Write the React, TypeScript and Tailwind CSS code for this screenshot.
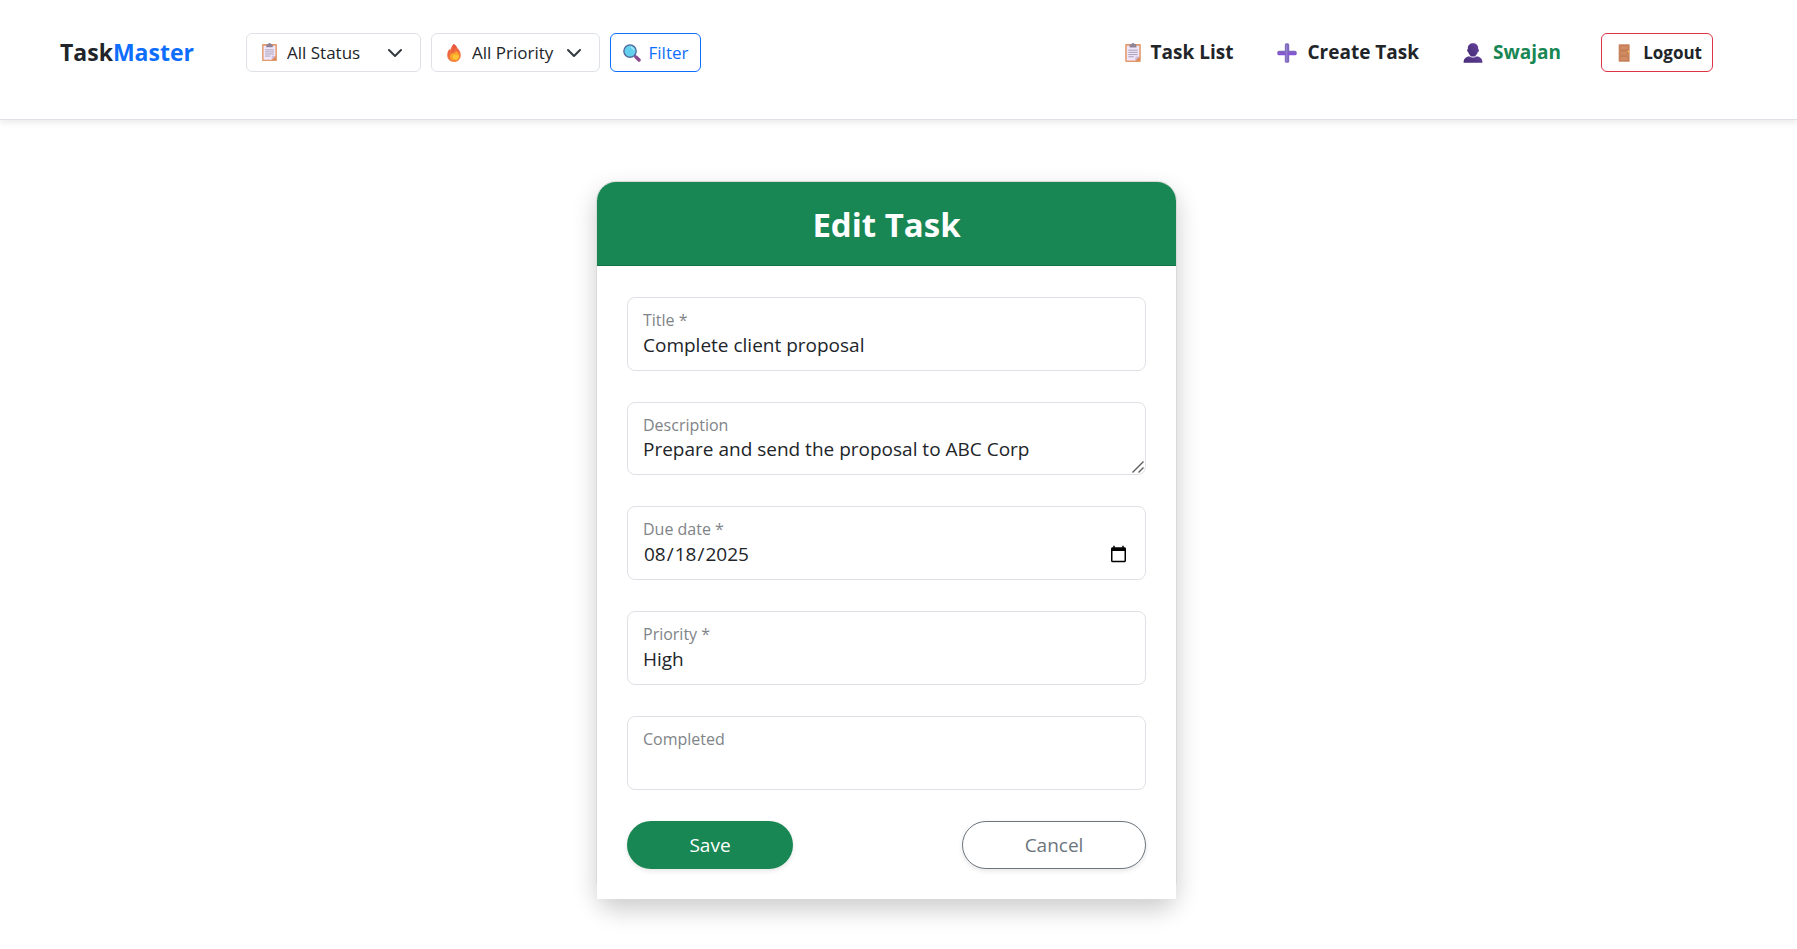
import React from 'react';

type IconProps = { className?: string };

function ClipboardIcon({ className = '' }: IconProps) {
  return (
    <svg viewBox="0 0 32 32" className={className} aria-hidden="true">
      <rect x="3.5" y="1.5" width="25" height="29" rx="1.6" fill="#e39b6c" />
      <path d="M6 4.5h20V22l-6 6H6z" fill="#efe6fa" />
      <path d="M26 21.5h-4.5a1.8 1.8 0 0 0-1.8 1.8V28z" fill="#cdb8e0" />
      <path d="M20 28.5l6.5-6.5v6.5z" fill="#dc8a5c" />
      <path d="M10.5 3.8c0-1 .8-1.8 1.8-1.8h1.2a2.6 2.6 0 0 1 5 0h1.2c1 0 1.8.8 1.8 1.8V7h-11z" fill="#8f8396" />
      <path d="M8.5 11.5h15M8.5 15h15M8.5 18.5h15M8.5 22h9" stroke="#a79bb4" strokeWidth="1.5" />
    </svg>
  );
}

function FireIcon({ className = '' }: IconProps) {
  return (
    <svg viewBox="0 0 32 32" className={className} aria-hidden="true">
      <defs>
        <linearGradient id="flame" x1="0.3" y1="0" x2="0.6" y2="1">
          <stop offset="0" stopColor="#e84a3f" />
          <stop offset="1" stopColor="#f58a3c" />
        </linearGradient>
      </defs>
      <path
        d="M15.8 0c3 1.600 5.300 4.400 6.200 7.600 2.600 1.800 6 6 6 11.900C28 27 23 32 16.200 32 9 32 4 27 4 20.100c0-5.300 1.800-8.700 4.200-10.800.4-.3.8 0 .8.500v2.600c1.200-4.200 2.800-8.400 6.100-12.200.2-.2.500-.3.700-.2z"
        fill="url(#flame)"
      />
      <path d="M13.500 5c-1.800 4-4.300 6.500-5 11M19.500 7.500c0 3.500-1 5-2.500 7" stroke="#f7794a" strokeWidth="1.600" fill="none" />
      <path
        d="M20.500 12.500c3 2.600 4.700 5.700 4.500 9.200-.3 4.200-3.600 7.300-8.300 7.300-4.900 0-8-2.900-8-6.800 0-3.300 2.300-5 4.700-5.700 3.300-1 5.800-1 7.100-4z"
        fill="#fba42c"
      />
      <path d="M22.300 18c1 5-2 9.500-6.300 10 4.700.8 8.300-2 8.300-6.200 0-1.500-.8-2.800-2-3.800z" fill="#ffd23d" />
      <ellipse cx="18" cy="23" rx="4.500" ry="4" fill="#ffc534" />
    </svg>
  );
}

function SearchIcon({ className = '' }: IconProps) {
  return (
    <svg viewBox="0 0 32 32" className={className} aria-hidden="true">
      <path d="M19.500 19.500l4 4" stroke="#5b6f9e" strokeWidth="3" />
      <path d="M23 23l5.500 5.500" stroke="#8a4a8c" strokeWidth="6" strokeLinecap="round" />
      <circle cx="12.500" cy="12.500" r="11" fill="#63d0ee" stroke="#52689b" strokeWidth="2.400" />
      <path d="M14.500 5.500a8 8 0 0 1 5 5" stroke="#b5ecf8" strokeWidth="2" strokeLinecap="round" fill="none" />
    </svg>
  );
}

function PlusIcon({ className = '' }: IconProps) {
  return (
    <svg viewBox="0 0 32 32" className={className} aria-hidden="true">
      <defs>
        <linearGradient id="plus-bar" x1="0" y1="0" x2="0" y2="1">
          <stop offset="0" stopColor="#7d68b5" />
          <stop offset="1" stopColor="#8650e0" />
        </linearGradient>
      </defs>
      <rect x="12.500" y="0.500" width="7" height="31" rx="2.500" fill="#7f67bd" />
      <rect x="0.500" y="12.500" width="31" height="7" rx="2.500" fill="url(#plus-bar)" />
      <rect x="14" y="2" width="2.500" height="28" rx="1.200" fill="#9380cb" />
    </svg>
  );
}

function PersonIcon({ className = '' }: IconProps) {
  return (
    <svg viewBox="0 0 32 32" className={className} aria-hidden="true">
      <defs>
        <linearGradient id="person" x1="1" y1="0" x2="0" y2="1">
          <stop offset="0" stopColor="#6543a0" />
          <stop offset="1" stopColor="#452a72" />
        </linearGradient>
      </defs>
      <path
        d="M16 .5c5 0 8.300 3.300 8.300 7.800v1.500c1 .2 1.400 1 1.200 2.200-.2 1.500-.8 2.300-1.800 2.500-.7 2.600-2 4.500-3.700 5.700v1.300h-8v-1.300c-1.700-1.200-3-3.100-3.700-5.700-1-.2-1.600-1-1.800-2.500-.2-1.200.2-2 1.200-2.200V8.300C7.700 3.800 11 .5 16 .5z"
        fill="url(#person)"
      />
      <path d="M9.500 21.300c2 1.400 4.200 2 6.500 2s4.500-.6 6.500-2c5.300 1 8.500 4.200 8.500 8.700v1.500H1V30c0-4.500 3.200-7.700 8.500-8.700z" fill="url(#person)" />
    </svg>
  );
}

function DoorIcon({ className = '' }: IconProps) {
  return (
    <svg viewBox="0 0 32 32" className={className} aria-hidden="true">
      <rect x="6.500" y="0.500" width="19.500" height="31" rx="1" fill="#cb865e" />
      <rect x="9" y="3.500" width="14.500" height="6.500" rx="1" fill="#d38e66" stroke="#bd7852" strokeWidth="1.200" />
      <rect x="9" y="13" width="12.500" height="6.500" rx="1" fill="#d38e66" stroke="#bd7852" strokeWidth="1.200" />
      <rect x="9" y="22.500" width="14.500" height="6.500" rx="1" fill="#d38e66" stroke="#bd7852" strokeWidth="1.200" />
      <circle cx="23.800" cy="13.500" r="1.700" fill="#ffc24a" />
    </svg>
  );
}

function Chevron({ className = '' }: IconProps) {
  return (
    <svg viewBox="0 0 16 16" className={className} fill="none" stroke="#343a40" strokeWidth="2" strokeLinecap="round" strokeLinejoin="round" aria-hidden="true">
      <path d="m2 5 6 6 6-6" />
    </svg>
  );
}

type FilterSelectProps = { label: string; icon: React.ReactNode; options: string[]; className: string };

function FilterSelect({ label, icon, options, className }: FilterSelectProps) {
  return (
    <div className={`relative ${className}`}>
      <select
        aria-label={label}
        className="h-[39px] w-full appearance-none rounded-md border border-[#dee2e6] bg-white pl-10 pr-8 text-[17px] text-[#212529]"
      >
        {options.map((option) => (
          <option key={option}>{option}</option>
        ))}
      </select>
      <span className="pointer-events-none absolute inset-y-0 left-3.5 flex items-center">{icon}</span>
      <span className="pointer-events-none absolute inset-y-0 right-[18px] flex items-center">
        <Chevron className="size-4" />
      </span>
    </div>
  );
}

function Field({ id, label, children }: { id: string; label: string; children: React.ReactNode }) {
  return (
    <div className="relative">
      {children}
      <label htmlFor={id} className="pointer-events-none absolute left-4 top-[11px] text-base leading-6 text-[#808488]">
        {label}
      </label>
    </div>
  );
}

const control =
  'block w-full appearance-none rounded-lg border border-[#dee2e6] bg-transparent px-[15px] pb-2.5 pt-8 text-[19px] leading-7 text-[#212529]';

export default function App() {
  return (
    <div className="min-h-screen bg-white font-['Open_Sans','Noto_Sans',sans-serif] text-[#212529]">
      <header className="flex min-h-[120px] items-start justify-between border-b border-[#dee2e6] pl-15 pr-21 pt-[33px] shadow-[0_3px_6px_rgba(0,0,0,0.08)]">
        <div className="flex items-center">
          <a href="#" className="mr-[50px] w-34 whitespace-nowrap text-[23px] font-bold">
            Task<span className="text-[#0d6efd]">Master</span>
          </a>
          <form className="flex items-center gap-2.5">
            <FilterSelect
              label="Status"
              icon={<ClipboardIcon className="size-[19px]" />}
              options={['All Status', 'Completed', 'Pending']}
              className="w-[175px]"
            />
            <FilterSelect
              label="Priority"
              icon={<FireIcon className="size-[18px]" />}
              options={['All Priority', 'High', 'Medium', 'Low']}
              className="w-[169px]"
            />
            <button
              type="button"
              className="flex h-[39px] w-[91px] items-center justify-center gap-2 rounded-md border border-[#0d6efd] text-[17px] text-[#0d6efd]"
            >
              <SearchIcon className="size-[18px]" />
              Filter
            </button>
          </form>
        </div>
        <nav className="flex h-[39px] items-center text-[19px] font-bold">
          <a href="#" className="mr-11 flex items-center gap-2">
            <ClipboardIcon className="size-5" />
            Task List
          </a>
          <a href="#" className="mr-11 flex items-center gap-2.5">
            <PlusIcon className="size-5" />
            Create Task
          </a>
          <a href="#" className="mr-10 flex items-center gap-2.5 text-[#198754]">
            <PersonIcon className="size-5" />
            Swajan
          </a>
          <button
            type="button"
            className="flex h-[39px] w-28 items-center justify-end gap-2.5 rounded-md border border-[#dc3545] pr-2.5 text-[17px]"
          >
            <DoorIcon className="size-[18px]" />
            Logout
          </button>
        </nav>
      </header>

      <main className="flex justify-center pl-4 pr-10 pt-[61px]">
        <section className="w-full max-w-[581px] rounded-[20px] border border-black/15 shadow-[0_10px_24px_rgba(0,0,0,0.2)]">
          <h1 className="rounded-t-[19px] border-b border-[#157347] bg-[#198754] pb-[19px] pt-[21px] text-center text-[33px] leading-[43px] font-bold text-white">
            Edit Task
          </h1>
          <form className="flex flex-col gap-[31px] bg-white px-[30px] pb-[30px] pt-[31px]">
            <Field id="title" label="Title *">
              <input id="title" type="text" defaultValue="Complete client proposal" className={`${control} h-[74px]`} />
            </Field>
            <Field id="description" label="Description">
              <textarea
                id="description"
                rows={1}
                defaultValue="Prepare and send the proposal to ABC Corp"
                className={`${control} h-[73px] [&::-webkit-resizer]:hidden`}
              />
              <svg
                viewBox="0 0 12 12"
                className="pointer-events-none absolute bottom-0.5 right-0.5 size-3"
                fill="none"
                stroke="#5c5c5c"
                strokeWidth="1.400"
                aria-hidden="true"
              >
                <path d="M0.500 11.500l11-11M6.500 11.500l5-5" />
              </svg>
            </Field>
            <Field id="due" label="Due date *">
              <input id="due" type="date" defaultValue="2025-08-18" className={`${control} h-[74px]`} />
            </Field>
            <Field id="priority" label="Priority *">
              <select id="priority" defaultValue="High" className={`${control} h-[74px]`}>
                <option>High</option>
                <option>Medium</option>
                <option>Low</option>
              </select>
            </Field>
            <Field id="completed" label="Completed">
              <input id="completed" type="checkbox" className={`${control} h-[74px]`} />
            </Field>
            <div className="flex justify-between text-[19px]">
              <button type="submit" className="h-12 w-[166px] rounded-full bg-[#198754] text-white shadow-[0_2px_5px_rgba(0,0,0,0.1)]">
                Save
              </button>
              <button
                type="button"
                className="h-12 w-46 rounded-full border border-[#6c757d] bg-white text-[#6c757d] shadow-[0_2px_5px_rgba(0,0,0,0.1)]"
              >
                Cancel
              </button>
            </div>
          </form>
        </section>
      </main>
    </div>
  );
}
